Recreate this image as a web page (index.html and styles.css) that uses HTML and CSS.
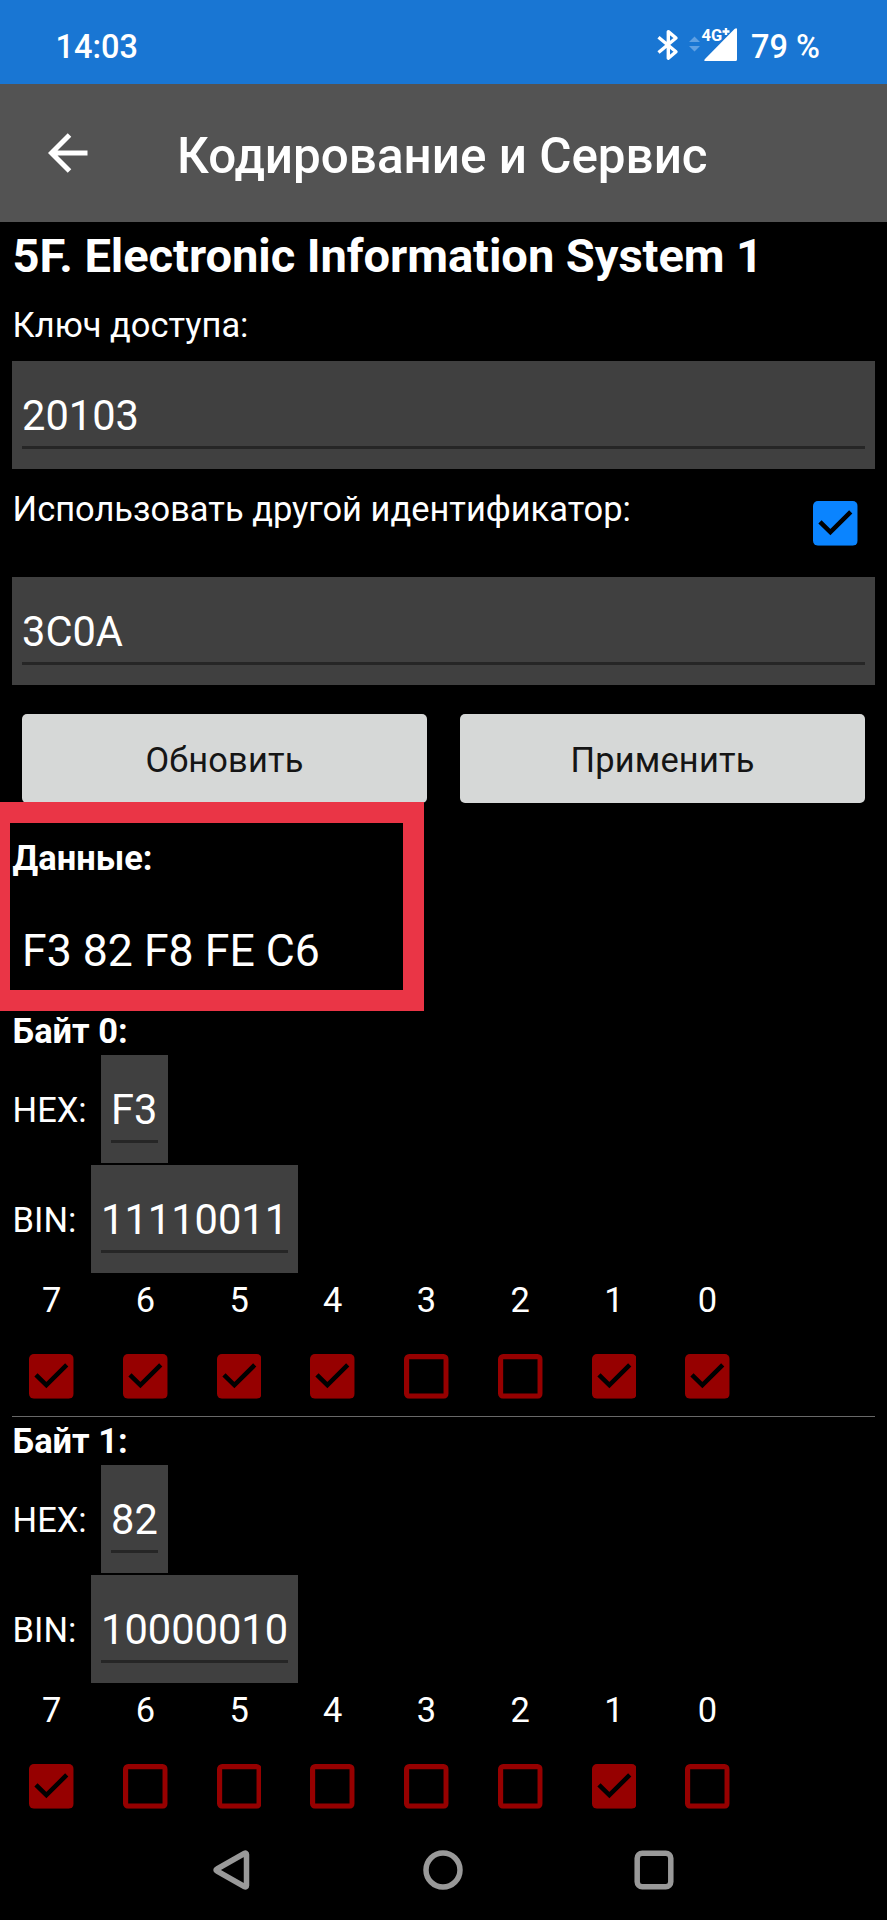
FILE: index.html
```html
<!DOCTYPE html>
<html lang="ru">
<head>
<meta charset="utf-8">
<title>Кодирование и Сервис</title>
<link rel="stylesheet" href="styles.css">
</head>
<body>
<svg class="defs" width="0" height="0" aria-hidden="true">
  <symbol id="check-on" viewBox="0 0 45 45">
    <path fill="currentColor" d="M5 0H40A5 5 0 0 1 45 5V40A5 5 0 0 1 40 45H5A5 5 0 0 1 0 40V5A5 5 0 0 1 5 0Z"/>
    <path fill="none" stroke="#000" stroke-width="4.6" d="M7 21L17.5 31.3L38 11"/>
  </symbol>
  <symbol id="check-off" viewBox="0 0 45 45">
    <rect x="2.6" y="2.6" width="39.8" height="39.8" rx="2.6" fill="none" stroke="currentColor" stroke-width="5.2"/>
  </symbol>
</svg>
<div class="screen">
  <div class="status">
    <span class="clock">14:03</span>
    <div class="indicators">
      <svg class="bluetooth" width="22" height="32" viewBox="0 0 22 32"><path fill="none" stroke="#fff" stroke-width="3.400" stroke-linejoin="round" d="M1.500 8.200L19 22.700L11.300 29.200V2.600L19 9L1.500 23.500"/></svg>
      <svg class="signal" width="52" height="36" viewBox="0 0 52 36"><path fill="#5fa0e3" d="M1 15L6.500 9.500L12 15ZM1 19H12L6.500 24.500Z"/><path fill="#fff" d="M49 2.500V32.500Q49 34 47.500 34H18Q15 34 17 32L46.500 2Q49 .3 49 2.500Z"/><text class="network" x="13.500" y="13.500">4G</text><path stroke="#fff" stroke-width="2.400" d="M34.500 4.500H41.500M38 1V8"/></svg>
      <span class="battery">79 %</span>
    </div>
  </div>
  <header class="appbar">
    <svg class="back" width="40" height="40" viewBox="0 0 40 40"><path fill="none" stroke="#fff" stroke-width="5" d="M39.500 20H4M21.500 2L3.500 20L21.500 38"/></svg>
    <h1 class="title">Кодирование и Сервис</h1>
  </header>
  <main class="content">
    <h2 class="unit">5F. Electronic Information System 1</h2>
    <div class="label key-label">Ключ доступа:</div>
    <div class="field"><div class="value">20103</div></div>
    <div class="other-id">
      <div class="label">Использовать другой идентификатор:</div>
      <svg class="check accent"><use href="#check-on"/></svg>
    </div>
    <div class="field"><div class="value">3C0A</div></div>
    <div class="actions">
      <button class="button" type="button">Обновить</button>
      <button class="button" type="button">Применить</button>
    </div>
    <section class="data">
      <div class="highlight"></div>
      <div class="label strong">Данные:</div>
      <div class="bytes">F3 82 F8 FE C6</div>
    </section>
    <section class="byte">
      <div class="label strong">Байт 0:</div>
      <div class="row hex"><span class="label">HEX:</span><div class="field"><div class="value">F3</div></div></div>
      <div class="row bin"><span class="label">BIN:</span><div class="field"><div class="value">11110011</div></div></div>
      <div class="bits label"><span>7</span><span>6</span><span>5</span><span>4</span><span>3</span><span>2</span><span>1</span><span>0</span></div>
      <div class="bits checks">
        <svg class="check"><use href="#check-on"/></svg>
        <svg class="check"><use href="#check-on"/></svg>
        <svg class="check"><use href="#check-on"/></svg>
        <svg class="check"><use href="#check-on"/></svg>
        <svg class="check"><use href="#check-off"/></svg>
        <svg class="check"><use href="#check-off"/></svg>
        <svg class="check"><use href="#check-on"/></svg>
        <svg class="check"><use href="#check-on"/></svg>
      </div>
      <hr class="divider">
    </section>
    <section class="byte last">
      <div class="label strong">Байт 1:</div>
      <div class="row hex"><span class="label">HEX:</span><div class="field"><div class="value">82</div></div></div>
      <div class="row bin"><span class="label">BIN:</span><div class="field"><div class="value">10000010</div></div></div>
      <div class="bits label"><span>7</span><span>6</span><span>5</span><span>4</span><span>3</span><span>2</span><span>1</span><span>0</span></div>
      <div class="bits checks">
        <svg class="check"><use href="#check-on"/></svg>
        <svg class="check"><use href="#check-off"/></svg>
        <svg class="check"><use href="#check-off"/></svg>
        <svg class="check"><use href="#check-off"/></svg>
        <svg class="check"><use href="#check-off"/></svg>
        <svg class="check"><use href="#check-off"/></svg>
        <svg class="check"><use href="#check-on"/></svg>
        <svg class="check"><use href="#check-off"/></svg>
      </div>
    </section>
  </main>
  <nav class="navbar">
    <svg class="nav-icon" viewBox="0 0 42 42"><path d="M34.300 4.500Q36.500 3.300 36.500 5.500V36.500Q36.500 38.700 34.300 37.500L7 22Q5 21 7 20Z"/></svg>
    <svg class="nav-icon" viewBox="0 0 42 42"><circle cx="21" cy="21" r="17"/></svg>
    <svg class="nav-icon" viewBox="0 0 42 42"><rect x="4.200" y="4.200" width="33.600" height="33.600" rx="5"/></svg>
  </nav>
</div>
</body>
</html>
```
FILE: styles.css
```css
* { box-sizing: border-box; }
body {
  margin: 0;
  background: #000;
  color: #fff;
  font-family: Roboto, "Noto Sans", sans-serif;
}
.defs { display: block; height: 0; }
.screen {
  display: flex;
  flex-direction: column;
  width: 887px;
  height: 1920px;
  overflow: hidden;
}
.status {
  display: flex;
  flex: none;
  justify-content: space-between;
  align-items: center;
  height: 84.4px;
  padding: 9px 67px 0 55.500px;
  background: #1976d3;
  font-size: 32.500px;
  font-weight: 500;
  line-height: 38px;
}
.indicators { display: flex; align-items: center; }
.bluetooth { margin: -3px 9px 0 0; }
.signal { margin: -3px 11px 0 0; overflow: visible; }
.network { fill: #fff; font-size: 16.500px; font-weight: 700; }
.appbar {
  display: flex;
  flex: none;
  align-items: center;
  height: 138px;
  padding-left: 47.500px;
  background: #535353;
}
.back { margin-top: -1px; }
.title {
  margin: 5px 0 0 89.500px;
  font-size: 49.400px;
  font-weight: 500;
  line-height: 58px;
}
.content { flex: none; padding: 2px 12px 0; }
.unit {
  margin: 1px 0 0;
  font-size: 47.100px;
  font-weight: 700;
  letter-spacing: -0.070px;
  line-height: 62px;
  text-indent: 0.500px;
  white-space: nowrap;
}
.label {
  font-size: 34.450px;
  line-height: 40px;
  text-indent: 0.600px;
  white-space: nowrap;
}
.strong { font-weight: 700; }
.key-label { margin: 18px 0 16px; }
.field {
  height: 108px;
  padding: 29px 10px 0;
  background: #404040;
}
.value {
  height: 59px;
  border-bottom: 3px solid #262626;
  font-size: 41.600px;
  line-height: 52px;
}
.other-id {
  display: flex;
  justify-content: space-between;
  align-items: flex-start;
  height: 108px;
  padding: 20px 17px 0 0;
}
.check {
  flex: none;
  display: block;
  width: 44.700px;
  height: 44.700px;
  color: #960000;
}
.accent { margin-top: 12px; color: #0a84ff; }
.actions {
  display: grid;
  grid-template-columns: 1fr 1fr;
  gap: 33px;
  margin: 29px 10px 0;
}
.button {
  height: 89px;
  padding: 2px 0 0;
  border: 0;
  border-radius: 5px;
  background: #d6d8d7;
  color: #151515;
  font-family: inherit;
  font-size: 34.400px;
  letter-spacing: 0.200px;
  line-height: 40px;
}
.data {
  position: relative;
  height: 208px;
  padding-top: 35px;
}
.highlight {
  position: absolute;
  top: -1.500px;
  left: -12px;
  width: 424px;
  height: 209px;
  border: solid #ea3546;
  border-width: 21.500px 21px 21.500px 10px;
}
.bytes {
  margin-top: 47px;
  padding-left: 10px;
  font-size: 44.600px;
  line-height: 52px;
}
.byte { height: 410px; }
.byte.last { height: 392px; }
.row { display: flex; align-items: center; }
.hex { margin-top: 4px; }
.bin { margin-top: 2px; }
.hex .label { width: 89px; }
.hex .field { width: 67px; }
.bin .label { width: 79px; }
.row .label { padding-top: 1px; }
.bits {
  display: flex;
  gap: 49px;
  padding-left: 17.400px;
}
.bits span { flex: none; width: 44.700px; text-align: center; text-indent: 0; }
.bits.label { margin-top: 7px; }
.checks { margin-top: 33.500px; }
.divider { height: 1.500px; margin: 17px 0 0; border: 0; background: #686868; }
.navbar {
  display: flex;
  flex: none;
  justify-content: space-between;
  align-items: center;
  height: 101px;
  margin-top: auto;
  padding: 0 212px 0 210px;
}
.nav-icon {
  width: 42px;
  height: 42px;
  fill: none;
  stroke: #999;
  stroke-width: 5.500px;
}
```
